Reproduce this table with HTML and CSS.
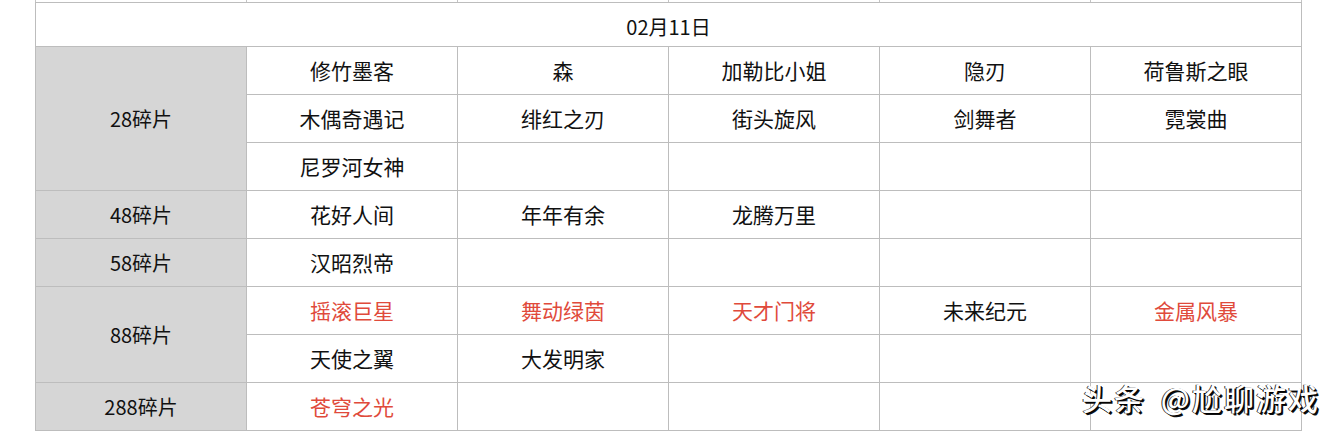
FILE: index.html
```html
<!DOCTYPE html>
<html lang="zh-CN">
<head>
<meta charset="utf-8">
<title>02月11日</title>
<link rel="stylesheet" href="styles.css">
</head>
<body>
<div class="page">
  <div class="stub">
    <div></div><div></div><div></div><div></div><div></div><div></div>
  </div>
  <div class="sheet">
    <div class="cell head">02月11日</div>

    <div class="cell label r3">28碎片</div>
    <div class="cell">修竹墨客</div>
    <div class="cell">森</div>
    <div class="cell">加勒比小姐</div>
    <div class="cell">隐刃</div>
    <div class="cell">荷鲁斯之眼</div>
    <div class="cell">木偶奇遇记</div>
    <div class="cell">绯红之刃</div>
    <div class="cell">街头旋风</div>
    <div class="cell">剑舞者</div>
    <div class="cell">霓裳曲</div>
    <div class="cell">尼罗河女神</div>
    <div class="cell"></div>
    <div class="cell"></div>
    <div class="cell"></div>
    <div class="cell"></div>

    <div class="cell label">48碎片</div>
    <div class="cell">花好人间</div>
    <div class="cell">年年有余</div>
    <div class="cell">龙腾万里</div>
    <div class="cell"></div>
    <div class="cell"></div>

    <div class="cell label">58碎片</div>
    <div class="cell">汉昭烈帝</div>
    <div class="cell"></div>
    <div class="cell"></div>
    <div class="cell"></div>
    <div class="cell"></div>

    <div class="cell label r2">88碎片</div>
    <div class="cell red">摇滚巨星</div>
    <div class="cell red">舞动绿茵</div>
    <div class="cell red">天才门将</div>
    <div class="cell">未来纪元</div>
    <div class="cell red">金属风暴</div>
    <div class="cell">天使之翼</div>
    <div class="cell">大发明家</div>
    <div class="cell"></div>
    <div class="cell"></div>
    <div class="cell"></div>

    <div class="cell label">288碎片</div>
    <div class="cell red">苍穹之光</div>
    <div class="cell"></div>
    <div class="cell"></div>
    <div class="cell"></div>
    <div class="cell"></div>
  </div>
  <div class="watermark">头条 @尬聊游戏</div>
</div>
</body>
</html>
```

FILE: styles.css
```css
html, body {
  margin: 0;
  padding: 0;
  background: #ffffff;
}
body {
  width: 1334px;
  height: 431px;
  overflow: hidden;
  font-family: "Noto Sans CJK SC", "Noto Sans", sans-serif;
  color: #111111;
}
.page {
  position: relative;
  width: 1334px;
  height: 431px;
  overflow: hidden;
}
.stub {
  margin-left: 35px;
  width: 1267px;
  box-sizing: border-box;
  height: 2px;
  padding: 0 1px;
  display: grid;
  grid-template-columns: repeat(6, 210px);
  column-gap: 1px;
  background: #c4c4c4;
}
.stub div {
  background: #ffffff;
}
.sheet {
  margin-left: 35px;
  width: 1267px;
  box-sizing: border-box;
  padding: 1px;
  display: grid;
  grid-template-columns: repeat(6, 210px);
  grid-template-rows: 43px repeat(8, 47px);
  gap: 1px;
  background: #bdbdbd;
}
.cell {
  background: #ffffff;
  display: flex;
  align-items: center;
  justify-content: center;
  font-size: 21px;
  line-height: 1;
  white-space: nowrap;
}
.head {
  grid-column: 1 / -1;
  font-size: 20px;
  padding-top: 4px;
}
.label {
  grid-column: 1;
  background: #d6d6d6;
  font-size: 20px;
}
.r3 {
  grid-row: span 3;
}
.r2 {
  grid-row: span 2;
}
.red {
  color: #e04a3b;
}
.watermark {
  position: absolute;
  right: 14px;
  top: 382px;
  font-size: 30px;
  line-height: 1;
  color: #ffffff;
  font-weight: 500;
  letter-spacing: 2px;
  word-spacing: 6px;
  text-shadow: 1px 1px 0 #000, 2px 2px 0 #111, -1px 0 0 #333;
}
```
